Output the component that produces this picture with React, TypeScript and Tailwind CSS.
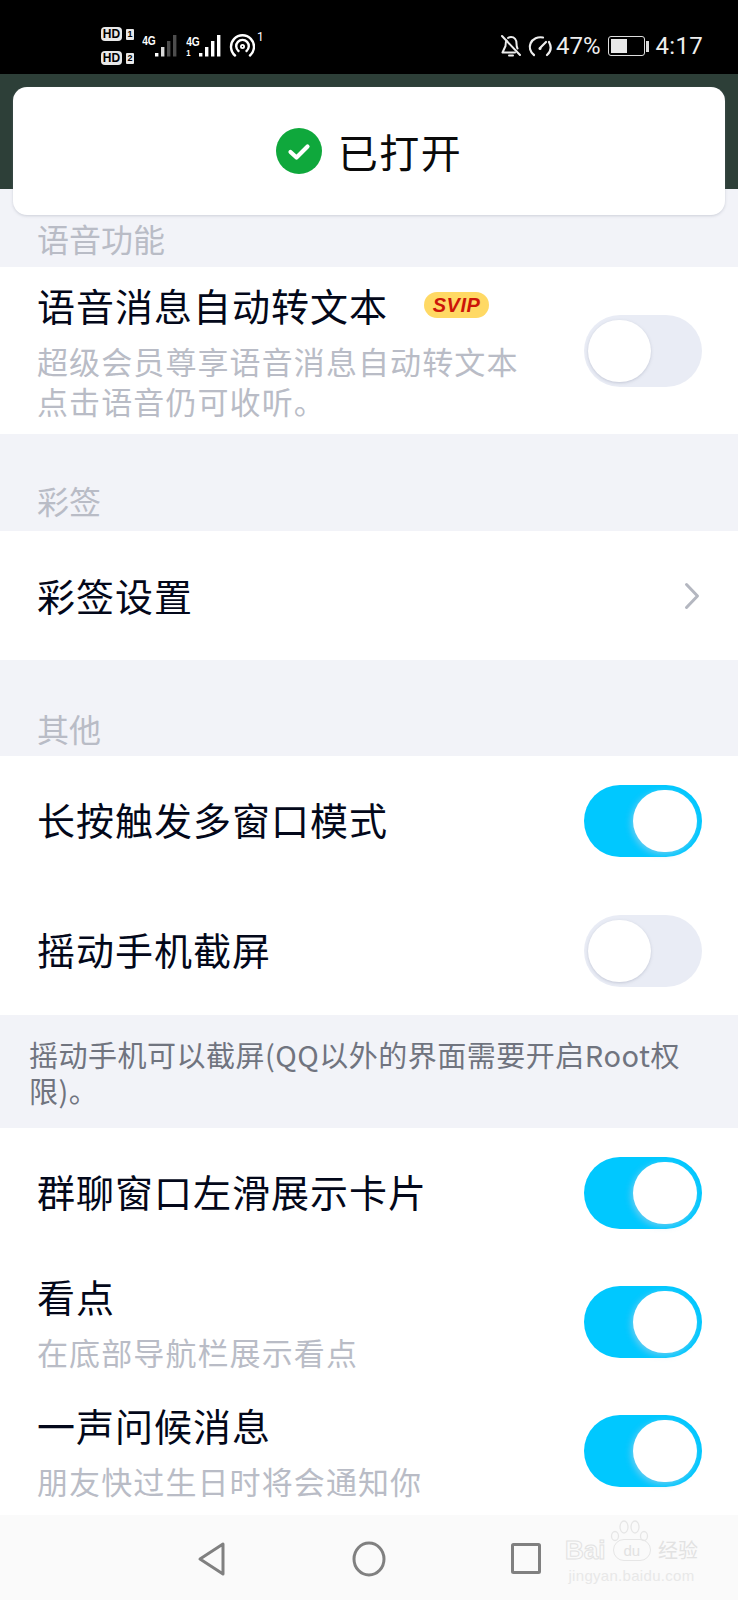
const FONT = "font-['Noto_Sans_CJK_SC','Noto_Sans',sans-serif]";

function Toggle({ on }: { on?: boolean }) {
  if (on) {
    return (
      <div className="relative h-[72px] w-[118px] flex-none rounded-full bg-[#00c8ff]">
        <div className="absolute left-[49px] top-[5px] h-[62px] w-[64px] rounded-full bg-white shadow-[-2px_2px_6px_rgba(150,205,235,0.7)]" />
      </div>
    );
  }
  return (
    <div className="relative h-[72px] w-[118px] flex-none rounded-full bg-[#e9ecf5]">
      <div className="absolute left-[4px] top-[5px] h-[62px] w-[63px] rounded-full bg-white shadow-[0_1px_3px_rgba(160,165,185,0.5)]" />
    </div>
  );
}

function SectionLabel({ text, className }: { text: string; className: string }) {
  return (
    <div className={`flex items-center pl-[37px] text-[32px] leading-none text-[#b9bcc6] ${className}`}>
      {text}
    </div>
  );
}

function Row({
  title,
  sub,
  on,
  height,
  badge,
}: {
  title: string;
  sub?: string[];
  on?: boolean;
  height: string;
  badge?: boolean;
}) {
  return (
    <div className={`flex items-center justify-between pl-[37px] pr-[36px] ${height}`}>
      <div className={sub ? "flex flex-col pt-[1px]" : "flex flex-col pb-[4px]"}>
        <div className="flex items-center text-[38px] leading-[46px] tracking-[1px] text-[#03081a]">
          {title}
          {badge && (
            <span className="ml-[36px] flex h-[26px] w-[65px] items-center justify-center rounded-full bg-[#ffd964] font-['Liberation_Sans',sans-serif] text-[20px] font-bold italic tracking-[0.5px] text-[#cc1508]">
              SVIP
            </span>
          )}
        </div>
        {sub && (
          <div className="mt-[13px] flex flex-col">
            {sub.map((line) => (
              <div key={line} className="text-[31px] leading-[40px] tracking-[1.1px] text-[#b9bcc6]">
                {line}
              </div>
            ))}
          </div>
        )}
      </div>
      <Toggle on={on} />
    </div>
  );
}

function Signal({ levels }: { levels: number[] }) {
  return (
    <svg className="-ml-[3px]" width="25" height="24" viewBox="0 0 25 24">
      {[0, 1, 2, 3].map((i) => (
        <rect
          key={i}
          x={1 + i * 6}
          y={[19, 13, 7, 1][i]}
          width="3.4"
          height={[3.5, 9.5, 15.5, 21.5][i]}
          fill="#fff"
          opacity={levels[i]}
        />
      ))}
    </svg>
  );
}

function HdTag({ n }: { n: string }) {
  return (
    <div className="flex items-center gap-[4px]">
      <span className="flex h-[14px] w-[21px] flex-none items-center justify-center rounded-[4px] bg-[#e8e8e8] font-['Liberation_Sans',sans-serif] text-[12px] font-bold leading-none text-black">
        HD
      </span>
      <span className="flex h-[11px] w-[8px] flex-none items-center justify-center rounded-[1px] bg-[#e8e8e8] font-['Liberation_Sans',sans-serif] text-[9px] font-bold leading-none text-black">
        {n}
      </span>
    </div>
  );
}

function StatusBar() {
  return (
    <div className="flex h-[74px] items-center bg-black pl-[101px] pr-[35px] pt-[18px] font-['Roboto',sans-serif] text-white">
      <div className="flex h-[38px] w-[33px] flex-none flex-col justify-between">
        <HdTag n="1" />
        <HdTag n="2" />
      </div>
      <div className="ml-[7px] flex items-end">
        <span className="mb-[11px] font-['Liberation_Sans',sans-serif] text-[12px] font-bold leading-none [transform:scaleX(0.85)]">4G</span>
        <Signal levels={[1, 0.85, 0.3, 0.3]} />
      </div>
      <div className="ml-[6px] flex items-end">
        <div className="flex flex-col font-['Liberation_Sans',sans-serif] text-[12px] font-bold leading-[11px] [transform:scaleX(0.85)]">
          <span>4G</span>
          <span className="text-[9px] leading-[10px]">1</span>
        </div>
        <Signal levels={[1, 1, 1, 1]} />
      </div>
      <svg className="ml-[6px]" width="26" height="24" viewBox="0 0 26 24" fill="none" stroke="#fff" strokeWidth="2.4" strokeLinecap="round">
        <path d="M6 21.5A11.5 11.5 0 1 1 21 21.5" />
        <path d="M9.5 17A6.3 6.3 0 1 1 17.5 17" />
        <circle cx="13.5" cy="12.5" r="1.6" strokeWidth="1.8" />
      </svg>
      <span className="mb-[18px] ml-[2px] text-[12px] leading-none">1</span>
      <div className="ml-auto flex items-center">
        <svg width="22" height="24" viewBox="0 0 22 24" fill="none" stroke="#eee" strokeWidth="2" strokeLinecap="round" strokeLinejoin="round">
          <path d="M2 2l18 19" />
          <path d="M6.5 6.5C5.5 8 5.500 9.500 5.500 12L2.500 18.500H15" />
          <path d="M8 4a5 5 0 0 1 3-1c3.500 0 5.500 3 5.500 6.500 0 2 .3 3.800 1 5" />
          <path d="M9 21.500h4" />
        </svg>
        <svg className="ml-[6px]" width="26" height="24" viewBox="0 0 26 24" fill="none" stroke="#eee" strokeWidth="2.2" strokeLinecap="round">
          <path d="M6 21C2 18 1 13 2.500 9.500C4.500 4.500 10 2.500 15 3.500" />
          <path d="M21 8c2.500 4.500 2 9.500-2 13" />
          <path d="M12 14l6-6" />
          <circle cx="12" cy="14.500" r="1.500" fill="#eee" stroke="none" />
        </svg>
        <span className="ml-[2px] text-[24px] leading-none text-[#eee]">47%</span>
        <div className="ml-[7px] flex h-[20px] w-[37px] items-center rounded-[3px] border border-[#ddd] p-[2px]">
          <div className="h-full w-[16px] bg-[#e8e8e8]" />
        </div>
        <div className="ml-[1px] h-[11px] w-[3px] bg-[#ddd]" />
        <span className="ml-[7px] text-[24px] leading-none tracking-[0.3px] text-[#eee]">4:17</span>
      </div>
    </div>
  );
}

function Toast() {
  return (
    <div className="absolute left-[13px] top-[87px] flex h-[128px] w-[712px] items-center justify-center rounded-[14px] bg-white shadow-[0_1px_3px_rgba(120,125,145,0.3)]">
      <svg width="46" height="46" viewBox="0 0 46 46">
        <circle cx="23" cy="23" r="23" fill="#0fa83c" />
        <path d="M14.500 24l6 5.500 11-11" fill="none" stroke="#fff" strokeWidth="4.200" strokeLinecap="round" strokeLinejoin="round" />
      </svg>
      <span className="ml-[16px] text-[40px] leading-none tracking-[1.5px] text-[#0a0a0a]">已打开</span>
    </div>
  );
}

function BaiduMark() {
  return (
    <div className="absolute left-[565px] top-[5px] flex w-[133px] flex-col items-center font-['Liberation_Sans',sans-serif]">
      <svg width="40" height="22" viewBox="0 0 40 22" fill="none" stroke="#e6e6e6" strokeWidth="1.300" className="-mb-[3px] ml-[-4px]">
        <ellipse cx="5" cy="16" rx="3.500" ry="4.500" />
        <ellipse cx="14" cy="7" rx="4" ry="6" />
        <ellipse cx="25" cy="7" rx="4" ry="6" />
        <ellipse cx="34" cy="16" rx="3.500" ry="4.500" />
      </svg>
      <div className="flex h-[22px] w-full items-center justify-between">
        <span className="text-[26px] font-bold leading-none text-transparent [-webkit-text-stroke:1px_#e2e2e2]">Bai</span>
        <span className="flex h-[22px] w-[38px] items-center justify-center rounded-full border border-[#e6e6e6] text-[15px] leading-none text-[#e2e2e2]">
          du
        </span>
        <span className={`${FONT} text-[20px] leading-none text-[#e2e2e2]`}>经验</span>
      </div>
      <div className="mt-[7px] text-[15px] leading-[16px] tracking-[0.3px] text-[#e8e8e8]">jingyan.baidu.com</div>
    </div>
  );
}

function NavBar() {
  return (
    <div className="relative flex h-[85px] items-center justify-center bg-[#fafafa]">
      <div className="flex items-center gap-[125px] pt-[2px]">
        <svg width="30" height="36" viewBox="0 0 30 36" fill="none" stroke="#808080" strokeWidth="3" strokeLinejoin="round">
          <path d="M26 3v30L3 18z" />
        </svg>
        <svg width="34" height="36" viewBox="0 0 34 36" fill="none" stroke="#808080" strokeWidth="3">
          <ellipse cx="17" cy="18" rx="15" ry="16" />
        </svg>
        <svg width="30" height="32" viewBox="0 0 30 32" fill="none" stroke="#808080" strokeWidth="3" strokeLinejoin="round">
          <rect x="1.500" y="1.500" width="27" height="28" rx="1" />
        </svg>
      </div>
      <BaiduMark />
    </div>
  );
}

export default function App() {
  return (
    <div className={`relative h-[1600px] w-[738px] overflow-hidden bg-[#f2f3f8] ${FONT}`}>
      <StatusBar />
      <div className="h-[115px] bg-[#2d3f38]" />
      <Toast />

      <SectionLabel text="语音功能" className="h-[78px] pt-[20px]" />
      <div className="bg-white">
        <Row
          title="语音消息自动转文本"
          sub={["超级会员尊享语音消息自动转文本", "点击语音仍可收听。"]}
          height="h-[167px]"
          badge
        />
      </div>

      <SectionLabel text="彩签" className="h-[97px] pt-[34px]" />
      <div className="flex h-[129px] items-center justify-between bg-white pl-[37px] pr-[38px]">
        <span className="pb-[2px] text-[38px] leading-none tracking-[1px] text-[#03081a]">彩签设置</span>
        <svg width="16" height="28" viewBox="0 0 16 28" fill="none" stroke="#b4b7c0" strokeWidth="3" strokeLinecap="round" strokeLinejoin="round">
          <path d="M2.500 2.500L13.500 14L2.500 25.500" />
        </svg>
      </div>

      <SectionLabel text="其他" className="h-[96px] pt-[40px]" />
      <div className="bg-white">
        <Row title="长按触发多窗口模式" on height="h-[130px]" />
        <Row title="摇动手机截屏" height="h-[129px]" />
      </div>

      <div className="h-[113px] pl-[29px] pr-[40px] pt-[21px] text-[29px] leading-[36px] tracking-[0.5px] text-[#70747f]">
        摇动手机可以截屏(QQ以外的界面需要开启Root权限)。
      </div>

      <div className="h-[387px] bg-white">
        <Row title="群聊窗口左滑展示卡片" on height="h-[129px]" />
        <Row title="看点" sub={["在底部导航栏展示看点"]} on height="h-[130px]" />
        <Row title="一声问候消息" sub={["朋友快过生日时将会通知你"]} on height="h-[128px]" />
      </div>

      <NavBar />
    </div>
  );
}
